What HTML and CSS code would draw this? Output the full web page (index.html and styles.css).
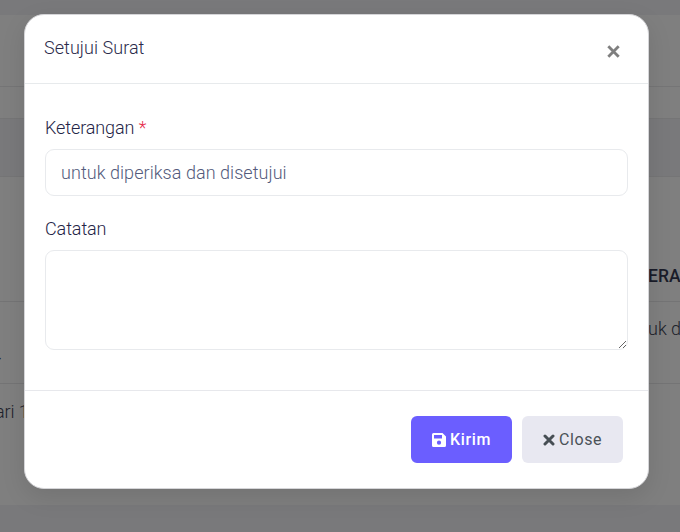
FILE: index.html
```html
<!DOCTYPE html>
<html lang="id">
<head>
<meta charset="utf-8">
<title>Setujui Surat</title>
<link rel="stylesheet" href="styles.css">
</head>
<body>
<main class="page">
  <section class="panel panel-top"><div class="panel-head"></div></section>
  <section class="panel panel-table">
    <div class="row row-head"><span></span><span class="heading">ERA</span></div>
    <div class="row row-first"><span class="dash">-</span><span class="cell">uk d</span></div>
    <div class="row row-last"><span class="date">ari 1</span><span></span></div>
  </section>
</main>
<div class="backdrop">
  <form class="modal">
    <header class="modal-header">
      <h1 class="title">Setujui Surat</h1>
      <svg class="dismiss" viewBox="0 0 12 12" width="13" height="13"><path d="M1.200 1.200l9.600 9.600M10.800 1.200l-9.600 9.600"/></svg>
    </header>
    <div class="modal-body">
      <label class="label" for="ket">Keterangan <span class="required">*</span></label>
      <input class="field" id="ket" value="untuk diperiksa dan disetujui">
      <label class="label label-note" for="note">Catatan</label>
      <textarea class="field note" id="note"></textarea>
    </div>
    <footer class="modal-footer">
      <button class="btn btn-primary" type="button"><svg width="14" height="14" viewBox="0 0 14 14"><path fill="currentColor" fill-rule="evenodd" d="M1.500 0H10.500L14 3.500V12.500Q14 14 12.500 14H1.500Q0 14 0 12.500V1.500Q0 0 1.500 0ZM2 2V5.500H10V2ZM7 7.600A2.100 2.100 0 1 0 7 11.800A2.100 2.100 0 1 0 7 7.600Z"/></svg><span>Kirim</span></button>
      <button class="btn btn-light" type="button"><svg class="cross" width="12" height="12" viewBox="0 0 12 12"><path d="M2 2l8 8M10 2l-8 8"/></svg><span>Close</span></button>
    </footer>
  </form>
</div>
</body>
</html>
```
FILE: styles.css
```css
* { box-sizing: border-box; }
body {
  margin: 0;
  height: 532px;
  overflow: hidden;
  font-family: Roboto, "Noto Sans", sans-serif;
  font-size: 18px;
  background: #79797b;
}
.page { padding-top: 15px; }
.panel { background: #7f7f7f; }
.panel-top { height: 104px; border-bottom: 1px solid #757576; }
.panel-head { height: 72px; border-bottom: 1px solid #757576; }
.panel-table { height: 329px; margin-top: 57px; border-top: 1px solid #757576; }
.row {
  display: grid;
  grid-template-columns: 648px 1fr;
  white-space: nowrap;
  color: #20222b;
}
.row-head { height: 125px; border-bottom: 1px solid #747475; padding-top: 89px; }
.heading { font-size: 17.5px; font-weight: 500; line-height: 20px; color: #1a1c29; }
.row-first { height: 82px; border-bottom: 1px solid #747475; }
.cell { padding-top: 17px; line-height: 20px; font-weight: 300; }
.dash { padding-top: 46px; line-height: 20px; text-indent: -4px; }
.date { padding-top: 18px; line-height: 20px; text-indent: -5px; font-weight: 300; letter-spacing: -.1px; }

.backdrop { position: absolute; inset: 0; padding: 14px 31px 0 24px; }
.modal {
  width: 625px;
  height: 475px;
  background: #fff;
  border: 1px solid #d5d5d8;
  border-radius: 20px;
  box-shadow: 0 8px 24px rgba(0, 0, 0, .1);
}
.modal-header {
  display: flex;
  justify-content: space-between;
  height: 69px;
  padding: 22px 28px 0 19px;
  border-bottom: 1px solid #e7eaec;
}
.title { margin: 0; font-size: 18px; line-height: 22px; font-weight: 300; color: #2b2b4b; letter-spacing: .05px; }
.dismiss { margin-top: 8px; fill: none; stroke: #7f7f7f; stroke-width: 2.6; }
.modal-body { height: 307px; padding: 33px 20px 0 20px; border-bottom: 1px solid #e7e8ec; }
.label { display: block; height: 22px; line-height: 22px; font-weight: 300; color: #252547; letter-spacing: -.1px; }
.required { color: #e52b4b; }
.field {
  display: block;
  width: 583px;
  height: 47px;
  margin: 10px 0 0;
  padding: 0 15px 1px;
  border: 1px solid #e8eaed;
  border-radius: 9px;
  outline: 0;
  background: #fff;
  color: #535b7c;
  font: 300 18px Roboto, "Noto Sans", sans-serif;
  letter-spacing: .05px;
}
.label-note { margin-top: 22px; }
.note { height: 100px; resize: vertical; }
.modal-footer { display: flex; justify-content: flex-end; gap: 10px; padding: 25px 25px 0; }
.btn {
  display: flex;
  align-items: center;
  justify-content: center;
  gap: 4px;
  width: 101px;
  height: 47px;
  padding: 0;
  border: 0;
  border-radius: 6px;
  font: 500 16px Roboto, "Noto Sans", sans-serif;
  letter-spacing: .6px;
}
.btn-primary { background: #6b5eff; color: #fff; }
.btn-light { background: #e8e8f1; color: #4b5258; font-weight: 400; }
.cross { fill: none; stroke: #464e54; stroke-width: 3; stroke-linecap: round; }
```
